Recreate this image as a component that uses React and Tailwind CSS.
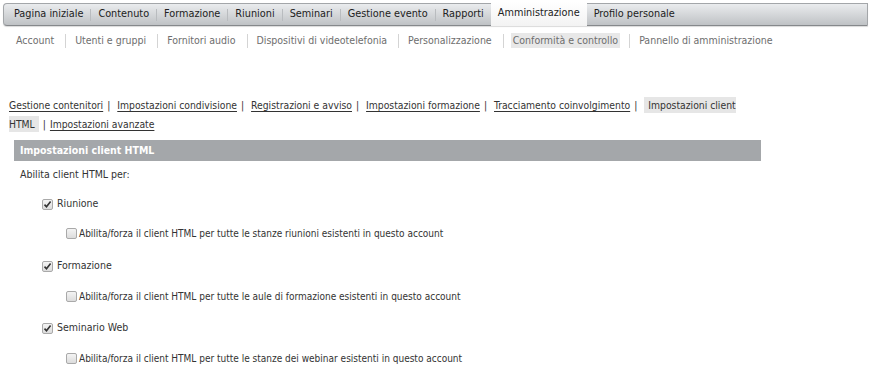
import React from "react";

const F = { fontFamily: "'DejaVu Sans Condensed', 'DejaVu Sans', sans-serif" };

function Check({ checked }) {
  return (
    <span className="inline-flex items-center justify-center w-[11px] h-[11px] rounded-[2px] border border-[#a9a9a9] bg-gradient-to-b from-[#f4f4f4] to-[#dcdcdc] shrink-0">
      {checked && (
        <svg width="9" height="9" viewBox="0 0 9 9">
          <path d="M1.5 4.6 L3.5 6.8 L7.6 1.6" fill="none" stroke="#333" strokeWidth="1.6" />
        </svg>
      )}
    </span>
  );
}

export default function App() {
  const top = [
    "Pagina iniziale",
    "Contenuto",
    "Formazione",
    "Riunioni",
    "Seminari",
    "Gestione evento",
    "Rapporti",
  ];
  const sub = [
    "Account",
    "Utenti e gruppi",
    "Fornitori audio",
    "Dispositivi di videotelefonia",
    "Personalizzazione",
    "Conformità e controllo",
    "Pannello di amministrazione",
  ];
  const links = [
    "Gestione contenitori",
    "Impostazioni condivisione",
    "Registrazioni e avviso",
    "Impostazioni formazione",
    "Tracciamento coinvolgimento",
  ];
  const sections = [
    ["Riunione", "Abilita/forza il client HTML per tutte le stanze riunioni esistenti in questo account"],
    ["Formazione", "Abilita/forza il client HTML per tutte le aule di formazione esistenti in questo account"],
    ["Seminario Web", "Abilita/forza il client HTML per tutte le stanze dei webinar esistenti in questo account"],
  ];
  return (
    <div className="w-[870px] h-[375px] bg-white overflow-hidden text-[#333]" style={F}>
      {/* top nav */}
      <div className="pl-[3px] pr-[2px] pt-[3px]">
        <div className="h-[23px] flex items-stretch rounded-l-[4px] border border-[#a3a6a9] border-b-[#85888b] bg-gradient-to-b from-[#eaecee] to-[#bfc2c5] shadow-[0_1px_1px_rgba(0,0,0,0.15)] text-[10.8px] text-[#222] pl-[3px]">
          {top.map((t, i) => (
            <div key={t} className="flex items-center">
              {i > 0 && <span className="w-px h-[12px] bg-[#b9bcbf]" />}
              <span className="px-[7px]">{t}</span>
            </div>
          ))}
          <div className="flex items-center -mt-[3px] h-[25px] px-[7px] bg-gradient-to-b from-white to-[#f3f3f3] text-[#222]">
            Amministrazione
          </div>
          <div className="flex items-center">
            <span className="px-[7px]">Profilo personale</span>
          </div>
        </div>
      </div>

      {/* sub nav */}
      <div className="flex items-center mt-[7px] pl-[7px] h-[15px] text-[10.5px] text-[#6e6e6e]">
        {sub.map((t, i) => (
          <div key={t} className="flex items-center">
            {i > 0 && <span className="w-px h-[14px] bg-[#d4d4d4]" />}
            <span className={"ml-[7px] mr-[9px] px-[2px] " + (t === "Conformità e controllo" ? "bg-[#e8e8e8]" : "")}>{t}</span>
          </div>
        ))}
      </div>

      {/* link tabs */}
      <div className="mt-[48px] pl-[9px] w-[745px] text-[10.3px] leading-[19px] text-[#333]">
        {links.map((t) => (
          <React.Fragment key={t}>
            <span className="underline underline-offset-2">{t}</span>
            <span className="px-[4px]">|</span>
            {" "}
          </React.Fragment>
        ))}
        <span className="bg-[#e6e6e6] py-[2px] px-[4px]">Impostazioni client HTML</span>
        <span className="px-[4px]">|</span>
        <span className="underline underline-offset-2">Impostazioni avanzate</span>
      </div>

      {/* header */}
      <div className="ml-[14px] mt-[6px] w-[747px] h-[21px] bg-[#a4a7aa] flex items-center pl-[6px] text-white font-bold text-[10.5px]">
        Impostazioni client HTML
      </div>

      <div className="pl-[20px] pt-[6px] text-[10.5px] text-[#333]">Abilita client HTML per:</div>

      <div className="flex flex-col">
        {sections.map(([a, b], idx) => (
          <div key={a} className="flex flex-col">
            <div className="flex items-center gap-[4px] pl-[42px] h-[31px] pt-[12px] text-[10.5px]">
              <Check checked />
              <span>{a}</span>
            </div>
            <div className={"flex items-center gap-[2px] pl-[66px] h-[31px] text-[10px] " + (idx === 0 ? "pt-[8px]" : "pt-[10px]")}>
              <Check />
              <span>{b}</span>
            </div>
          </div>
        ))}
      </div>
    </div>
  );
}
